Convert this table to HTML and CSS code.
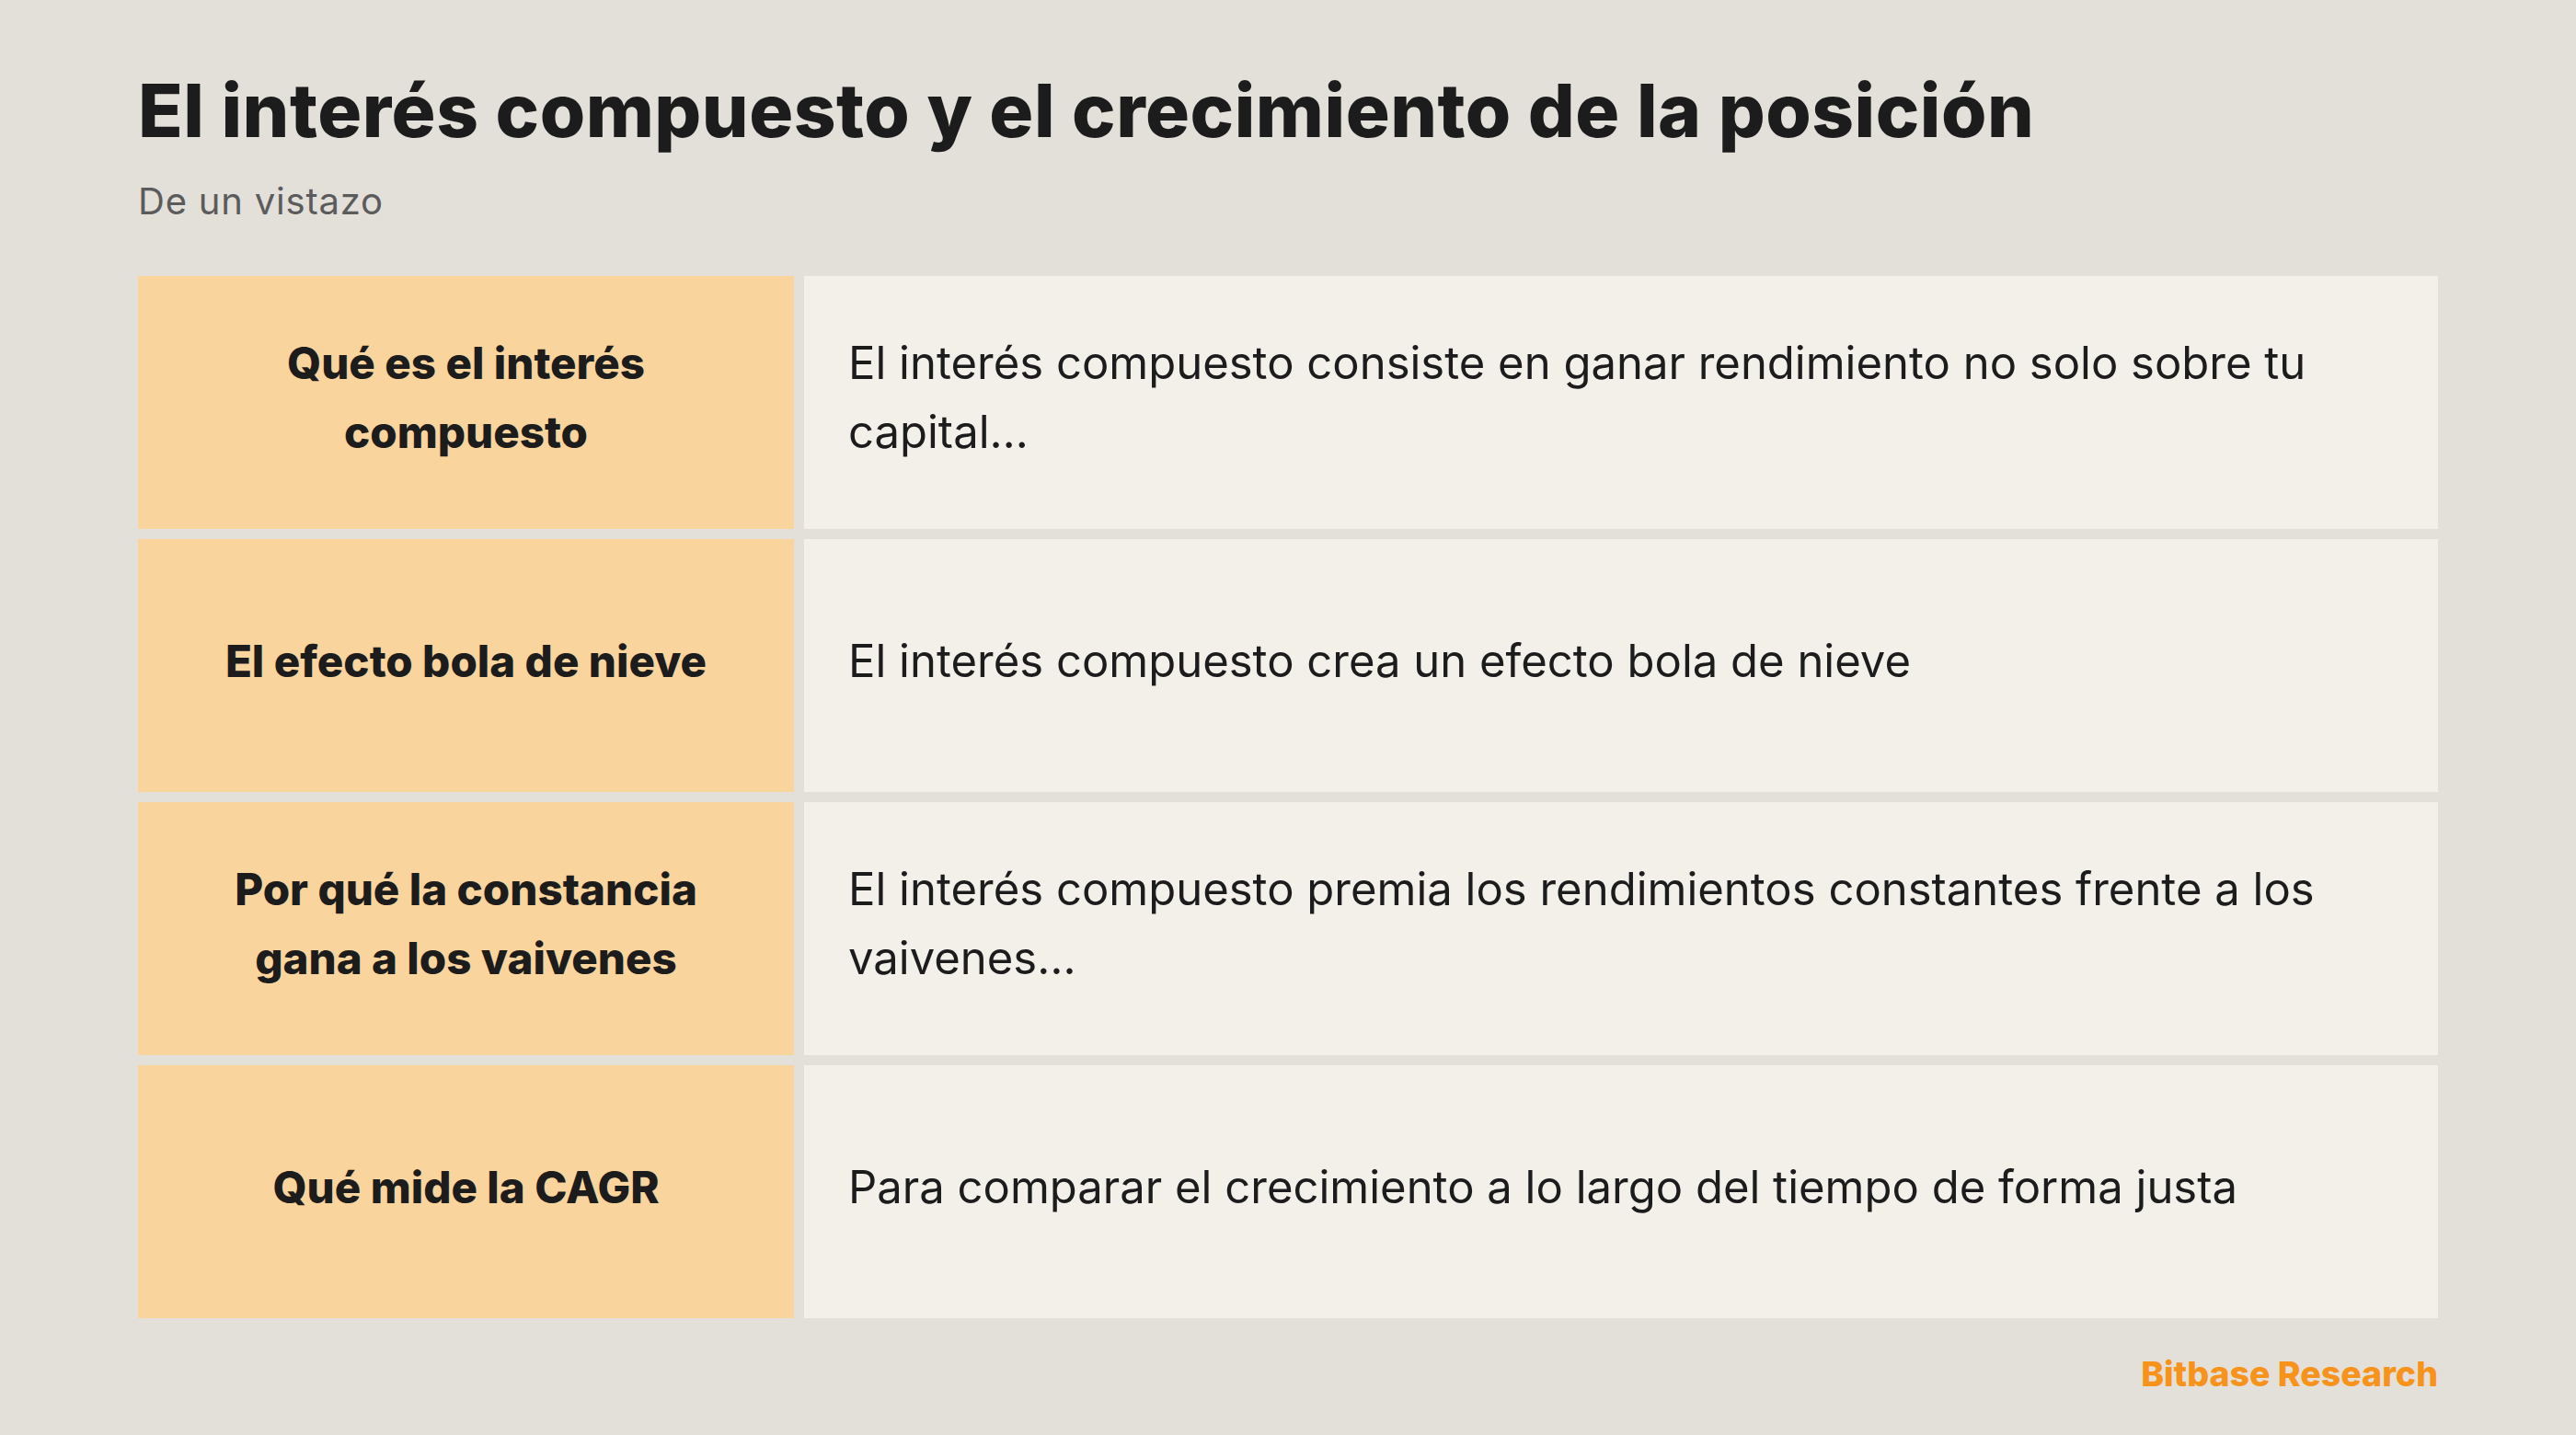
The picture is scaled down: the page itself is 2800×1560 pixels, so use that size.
FILE: index.html
```html
<!DOCTYPE html>
<html lang="es">
<head>
<meta charset="utf-8">
<title>El interés compuesto y el crecimiento de la posición</title>
<link rel="stylesheet" href="styles.css">
</head>
<body>
<main class="slide">
  <header class="head">
    <h1 class="title">El interés compuesto y el crecimiento de la posición</h1>
    <p class="subtitle">De un vistazo</p>
  </header>
  <section class="table">
    <div class="label">Qué es el interés compuesto</div>
    <div class="body">El interés compuesto consiste en ganar rendimiento no solo sobre tu capital…</div>
    <div class="label">El efecto bola de nieve</div>
    <div class="body">El interés compuesto crea un efecto bola de nieve</div>
    <div class="label">Por qué la constancia gana a los vaivenes</div>
    <div class="body">El interés compuesto premia los rendimientos constantes frente a los vaivenes…</div>
    <div class="label">Qué mide la CAGR</div>
    <div class="body">Para comparar el crecimiento a lo largo del tiempo de forma justa</div>
  </section>
  <footer class="foot">Bitbase Research</footer>
</main>
</body>
</html>
```
FILE: styles.css
```css
html, body {
  margin: 0;
  padding: 0;
  background: #e3dfd9;
}
body {
  width: 2800px;
  height: 1560px;
  overflow: hidden;
  font-family: "Inter", "Noto Sans", sans-serif;
  color: #1c1c1c;
}
.slide {
  padding: 72px 150px 0 150px;
  display: flex;
  flex-direction: column;
}
.title {
  margin: 0;
  font-size: 80px;
  line-height: 96px;
  font-weight: 800;
  letter-spacing: 0.5px;
  color: #1c1c1c;
}
.subtitle {
  margin: 27px 0 0 0;
  font-size: 40px;
  line-height: 48px;
  font-weight: 400;
  letter-spacing: 0.8px;
  color: #5b5b5b;
}
.table {
  margin-top: 57px;
  display: grid;
  grid-template-columns: 713px 1fr;
  grid-auto-rows: 275px;
  column-gap: 11px;
  row-gap: 11px;
}
.label,
.body {
  display: flex;
  align-items: center;
  box-sizing: border-box;
  padding-bottom: 11px;
  line-height: 75px;
}
.label {
  background: #f9d49d;
  justify-content: center;
  text-align: center;
  padding-left: 64px;
  padding-right: 64px;
  font-size: 47.5px;
  font-weight: 800;
}
.body {
  background: #f3f0e9;
  padding-left: 48px;
  padding-right: 48px;
  font-size: 49px;
  font-weight: 400;
}
.foot {
  margin-top: 38px;
  align-self: flex-end;
  font-size: 37.5px;
  line-height: 45px;
  font-weight: 800;
  color: #f7931a;
}
```
